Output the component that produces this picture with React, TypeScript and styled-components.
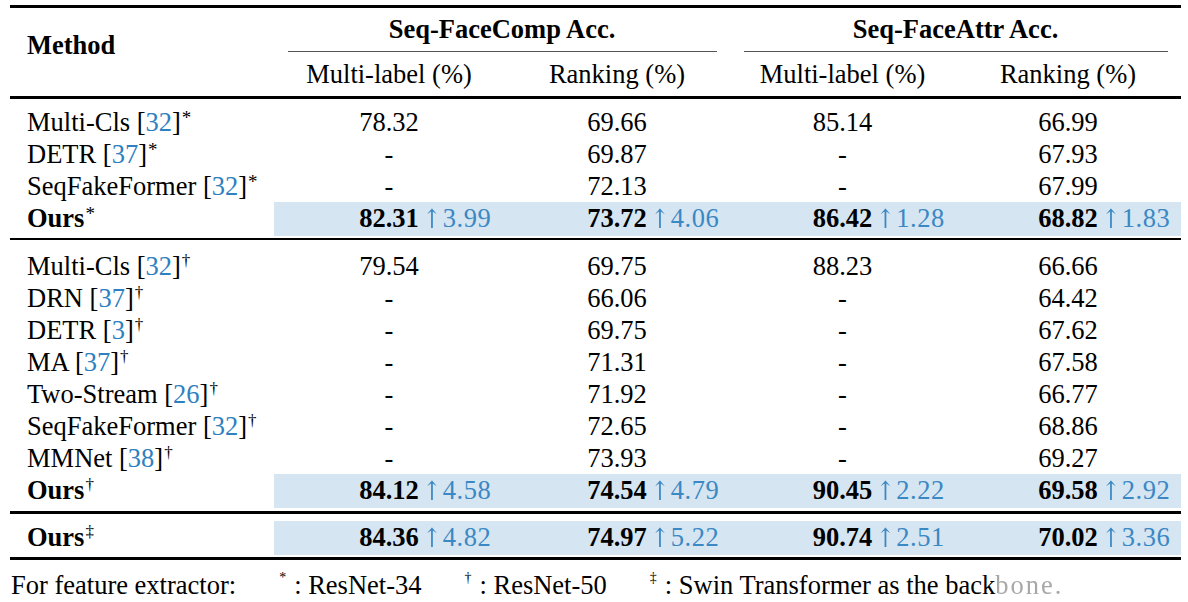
import React from 'react'
import styled, { createGlobalStyle } from 'styled-components'

const GlobalStyle = createGlobalStyle`
  html, body { margin: 0; padding: 0; background: #fff; }
  body { font-family: "Liberation Serif", "Times New Roman", serif; color: #000; }
`

// method column + four metric columns
const COLS = '264px 230px 226px 225px 226px'

const Page = styled.div`
  width: 1171px;
  padding: 5px 0 0 10px;
`

const Rule = styled.div<{ $h: number }>`
  height: ${p => p.$h}px;
  background: #000;
`

const Header = styled.div`
  display: grid;
  grid-template-columns: ${COLS};
  grid-template-rows: 43px 1px 44px;
  font-size: 26.5px;
`

const MethodHead = styled.div`
  grid-row: 1 / 4;
  grid-column: 1;
  align-self: center;
  padding: 0 0 14px 17px;
  font-weight: bold;
`

const GroupHead = styled.div<{ $col: number }>`
  grid-row: 1;
  grid-column: ${p => p.$col} / span 2;
  display: flex;
  align-items: center;
  justify-content: center;
  font-weight: bold;
`

const CMidRule = styled.div<{ $col: number }>`
  grid-row: 2;
  grid-column: ${p => p.$col} / span 2;
  margin: 0 13px 0 14px;
  background: #555;
`

const SubHead = styled.div<{ $col: number }>`
  grid-row: 3;
  grid-column: ${p => p.$col};
  display: flex;
  align-items: center;
  justify-content: center;
`

const Group = styled.div<{ $pt: number; $pb: number }>`
  padding: ${p => p.$pt}px 0 ${p => p.$pb}px;
`

const Row = styled.div`
  display: grid;
  grid-template-columns: ${COLS};
  height: 32px;
  font-size: 26.5px;
  line-height: 32px;
`

const MethodCell = styled.div<{ $bold?: boolean }>`
  padding-left: 17px;
  white-space: nowrap;
  font-weight: ${p => (p.$bold ? 'bold' : 'normal')};
`

const Cell = styled.div`
  text-align: center;
`

const GainCell = styled.div`
  display: grid;
  grid-template-columns: 1fr auto 1fr;
  background: #d5e5f1;
  white-space: nowrap;
`

const Best = styled.span`
  grid-column: 2;
  font-weight: bold;
`

const Gain = styled.span`
  grid-column: 3;
  padding-left: 6px;
  color: #3a88c4;
  font-family: "Liberation Serif", serif;
  letter-spacing: 0.5px;
`

const Arrow = styled.span`
  display: inline-block;
  margin: 0 1px 0 -2px;
  font-family: "DejaVu Serif", serif;
  font-size: 22px;
  font-weight: 300;
  transform: scaleY(1.2);
`

const Cite = styled.span`
  color: #2f80c0;
`

const Sup = styled.span<{ $big?: boolean }>`
  font-size: ${p => (p.$big ? 19 : 17)}px;
  font-weight: normal;
  line-height: 0;
  vertical-align: ${p => (p.$big ? 7 : 9)}px;
  margin-left: 1px;
`

const Footer = styled.div`
  display: flex;
  align-items: baseline;
  padding: 10px 0 0 1px;
  font-size: 26.5px;
  line-height: 30px;
  white-space: nowrap;
`

const Note = styled.span`
  margin-left: 43px;
`

const Mark = styled.span`
  font-size: 14px;
  line-height: 0;
  vertical-align: 12px;
  margin-right: 8px;
`

const Faded = styled.span`
  color: #a8a8a8;
  letter-spacing: 2px;
  filter: blur(0.6px);
`

type Val = string | [string, string]
type Entry = { name: string; cite?: string; mark: string; bold?: boolean; vals: Val[] }

const g1: Entry[] = [
  { name: 'Multi-Cls', cite: '32', mark: '*', vals: ['78.32', '69.66', '85.14', '66.99'] },
  { name: 'DETR', cite: '37', mark: '*', vals: ['-', '69.87', '-', '67.93'] },
  { name: 'SeqFakeFormer', cite: '32', mark: '*', vals: ['-', '72.13', '-', '67.99'] },
  { name: 'Ours', mark: '*', bold: true, vals: [['82.31', '3.99'], ['73.72', '4.06'], ['86.42', '1.28'], ['68.82', '1.83']] },
]

const g2: Entry[] = [
  { name: 'Multi-Cls', cite: '32', mark: '†', vals: ['79.54', '69.75', '88.23', '66.66'] },
  { name: 'DRN', cite: '37', mark: '†', vals: ['-', '66.06', '-', '64.42'] },
  { name: 'DETR', cite: '3', mark: '†', vals: ['-', '69.75', '-', '67.62'] },
  { name: 'MA', cite: '37', mark: '†', vals: ['-', '71.31', '-', '67.58'] },
  { name: 'Two-Stream', cite: '26', mark: '†', vals: ['-', '71.92', '-', '66.77'] },
  { name: 'SeqFakeFormer', cite: '32', mark: '†', vals: ['-', '72.65', '-', '68.86'] },
  { name: 'MMNet', cite: '38', mark: '†', vals: ['-', '73.93', '-', '69.27'] },
  { name: 'Ours', mark: '†', bold: true, vals: [['84.12', '4.58'], ['74.54', '4.79'], ['90.45', '2.22'], ['69.58', '2.92']] },
]

const g3: Entry[] = [
  { name: 'Ours', mark: '‡', bold: true, vals: [['84.36', '4.82'], ['74.97', '5.22'], ['90.74', '2.51'], ['70.02', '3.36']] },
]

function TableRow({ e }: { e: Entry }) {
  return (
    <Row>
      <MethodCell $bold={e.bold}>
        {e.name}
        {e.cite && (
          <>
            {' ['}
            <Cite>{e.cite}</Cite>]
          </>
        )}
        <Sup $big={e.mark === '*'}>{e.mark}</Sup>
      </MethodCell>
      {e.vals.map((v, i) =>
        typeof v === 'string' ? (
          <Cell key={i}>{v}</Cell>
        ) : (
          <GainCell key={i}>
            <Best>{v[0]}</Best>
            <Gain>
              <Arrow>↑</Arrow>
              {v[1]}
            </Gain>
          </GainCell>
        )
      )}
    </Row>
  )
}

export default function App() {
  return (
    <>
      <GlobalStyle />
      <Page>
        <Rule $h={3} />
        <Header>
          <MethodHead>Method</MethodHead>
          <GroupHead $col={2}>Seq-FaceComp Acc.</GroupHead>
          <GroupHead $col={4}>Seq-FaceAttr Acc.</GroupHead>
          <CMidRule $col={2} />
          <CMidRule $col={4} />
          <SubHead $col={2}>Multi-label (%)</SubHead>
          <SubHead $col={3}>Ranking (%)</SubHead>
          <SubHead $col={4}>Multi-label (%)</SubHead>
          <SubHead $col={5}>Ranking (%)</SubHead>
        </Header>
        <Rule $h={3} />
        <Group $pt={7} $pb={4}>
          {g1.map((e, i) => <TableRow key={i} e={e} />)}
        </Group>
        <Rule $h={2} />
        <Group $pt={10} $pb={5}>
          {g2.map((e, i) => <TableRow key={i} e={e} />)}
        </Group>
        <Rule $h={3} />
        <Group $pt={7} $pb={4}>
          {g3.map((e, i) => <TableRow key={i} e={e} />)}
        </Group>
        <Rule $h={3} />
        <Footer>
          <span>For feature extractor:</span>
          <Note><Mark>*</Mark>: ResNet-34</Note>
          <Note><Mark>†</Mark>: ResNet-50</Note>
          <Note><Mark>‡</Mark>: Swin Transformer as the back<Faded>bone.</Faded></Note>
        </Footer>
      </Page>
    </>
  )
}
